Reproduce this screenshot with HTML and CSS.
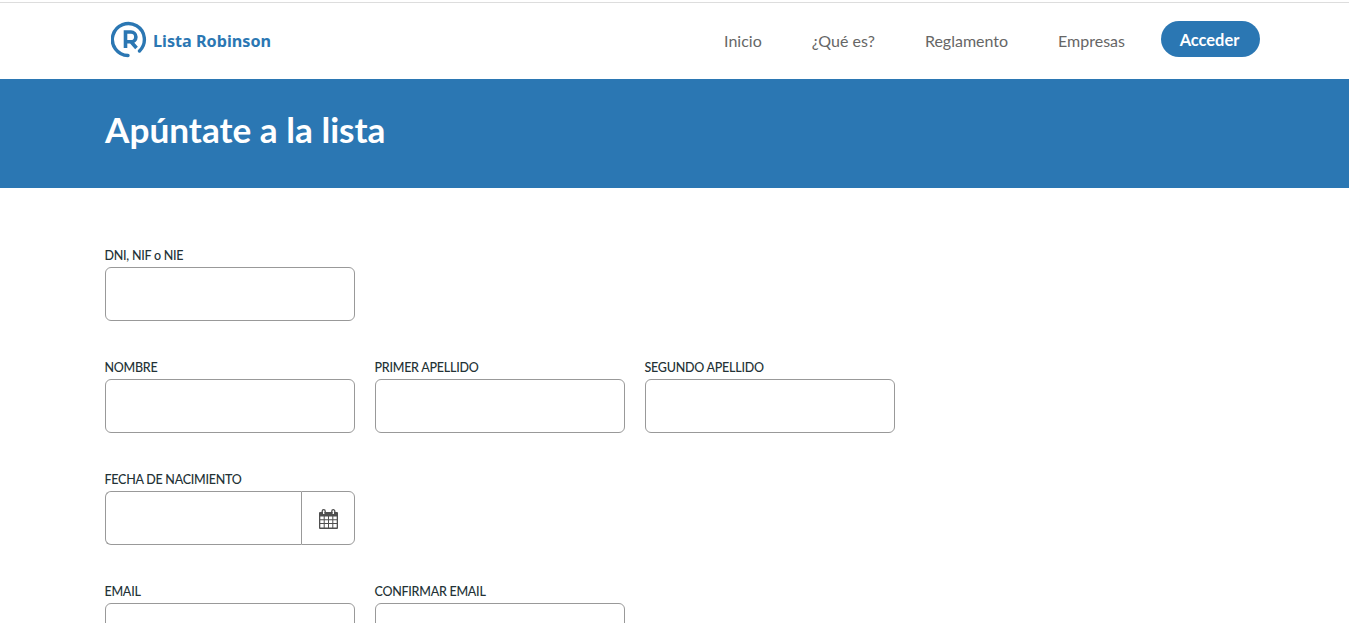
FILE: index.html
```html
<!DOCTYPE html>
<html lang="es">

<head>
    <meta charset="utf-8">
    <meta name="viewport" content="width=device-width, initial-scale=1.0">
    <title>Lista Robinson</title>
    <link rel="stylesheet" href="styles.css">
</head>

<body>
    <div class="page">
        <header class="topbar">
            <a class="logo" href="#">
                <svg class="logo-icon" width="36" height="37" viewBox="0 0 36 37" fill="none" stroke="currentColor"
                    stroke-width="3.400" aria-hidden="true">
                    <path d="M17 34.500A16 16 0 1 1 28.500 30" stroke-linecap="round"></path>
                    <path d="M14.500 27V11h5.500a4.700 4.700 0 0 1 0 9.800h-5.500M20 20.800L25.500 27" stroke-width="3.600"></path>
                </svg>
                <span>Lista Robinson</span>
            </a>
            <nav class="menu">
                <a href="#">Inicio</a>
                <a href="#">¿Qué es?</a>
                <a href="#">Reglamento</a>
                <a href="#">Empresas</a>
            </nav>
            <a class="login" href="#">Acceder</a>
        </header>

        <section class="banner">
            <h1>Apúntate a la lista</h1>
        </section>

        <main>
            <form class="form">
                <div class="row">
                    <div class="field">
                        <label for="dni">DNI, NIF o NIE</label>
                        <input type="text" id="dni">
                    </div>
                </div>
                <div class="row">
                    <div class="field">
                        <label for="nombre">NOMBRE</label>
                        <input type="text" id="nombre">
                    </div>
                    <div class="field">
                        <label for="apellido1">PRIMER APELLIDO</label>
                        <input type="text" id="apellido1">
                    </div>
                    <div class="field">
                        <label for="apellido2">SEGUNDO APELLIDO</label>
                        <input type="text" id="apellido2">
                    </div>
                </div>
                <div class="row">
                    <div class="field">
                        <label for="fecha">FECHA DE NACIMIENTO</label>
                        <div class="date-group">
                            <input type="text" id="fecha">
                            <span class="date-btn">
                                <svg width="19" height="20" viewBox="0 0 19 20" aria-hidden="true">
                                    <path fill="#4f4f4f" d="M1 3h17a1 1 0 0 1 1 1v15a1 1 0 0 1-1 1H1a1 1 0 0 1-1-1V4a1 1 0 0 1 1-1z"></path>
                                    <path fill="#fff" d="M1.300 7.500h3.400v2.700H1.300zM5.700 7.500h3.300v2.700H5.700zM10 7.500h3.300v2.700H10zM14.300 7.500h3.400v2.700h-3.400zM1.300 11.200h3.400v2.700H1.300zM5.700 11.200h3.300v2.700H5.700zM10 11.200h3.300v2.700H10zM14.300 11.200h3.400v2.700h-3.400zM1.300 14.900h3.400v3.700H1.300zM5.700 14.900h3.300v3.700H5.700zM10 14.900h3.300v3.700H10zM14.300 14.900h3.400v3.700h-3.400z"></path>
                                    <path fill="#fff" d="M4 3h1.400v2H4zM13.600 3H15v2h-1.400z"></path>
                                    <path fill="none" stroke="#4f4f4f" stroke-width="1.300" d="M3.200 4V2.200a1.500 1.500 0 0 1 3 0V4M12.800 4V2.200a1.500 1.500 0 0 1 3 0V4"></path>
                                </svg>
                            </span>
                        </div>
                    </div>
                </div>
                <div class="row">
                    <div class="field">
                        <label for="email">EMAIL</label>
                        <input type="text" id="email">
                    </div>
                    <div class="field">
                        <label for="email2">CONFIRMAR EMAIL</label>
                        <input type="text" id="email2">
                    </div>
                </div>
            </form>
        </main>
    </div>
</body>

</html>
```

FILE: styles.css
```css
*,
*::after,
*::before {
    margin: 0;
    padding: 0;
    box-sizing: border-box;
}

html,
body {
    width: 1351px;
    height: 623px;
    overflow: hidden;
    background-color: #fff;
}

body {
    font-family: Lato, 'Liberation Sans', sans-serif;
    padding-top: 2px;
}

a {
    text-decoration: none;
}

.page {
    width: 1349px;
    height: 621px;
    overflow: hidden;
}

.topbar {
    display: flex;
    align-items: center;
    height: 77px;
    padding: 0 89px 5px 111px;
    border-top: 1px solid #ddd;
    background-color: #fff;
}

.logo {
    display: flex;
    align-items: center;
    gap: 6px;
    color: #2b77b3;
    font-family: 'Noto Sans', sans-serif;
    font-size: 16.200px;
    font-weight: 700;
}

.logo-icon {
    display: block;
    margin-top: 2px;
}

.logo span {
    margin-top: 4px;
}

.menu {
    display: flex;
    gap: 50px;
    margin-left: auto;
    margin-right: 36px;
}

.menu a {
    color: #666;
    font-size: 16px;
    line-height: 20px;
    margin-top: 5px;
}

.login {
    display: block;
    width: 99px;
    height: 36px;
    padding-right: 2px;
    border-radius: 18px;
    background-color: #2b77b3;
    color: #fff;
    font-size: 16.400px;
    font-weight: 700;
    line-height: 38px;
    text-align: center;
}

.banner {
    height: 109px;
    padding: 0 105px;
    background-color: #2b77b3;
}

.banner h1 {
    color: #fff;
    font-size: 35.200px;
    font-weight: 700;
    line-height: 100px;
}

.form {
    display: flex;
    flex-direction: column;
    gap: 39px;
    padding: 60px 105px 0;
}

.row {
    display: flex;
    gap: 20px;
}

.field {
    width: 250px;
}

.field label {
    display: block;
    height: 19px;
    margin-left: -.5px;
    color: #233236;
    font-size: 12.500px;
    font-weight: 500;
    line-height: 15px;
    letter-spacing: -.25px;
}

.field input {
    display: block;
    width: 100%;
    height: 54px;
    padding: 0 12px;
    border: 1px solid #999;
    border-radius: 6px;
    background-color: #fff;
    outline: none;
}

.date-group {
    display: flex;
}

.date-group input {
    flex: 1;
    width: auto;
    min-width: 0;
    border-right: 0;
    border-radius: 6px 0 0 6px;
}

.date-btn {
    display: flex;
    align-items: center;
    justify-content: center;
    width: 54px;
    height: 54px;
    padding-top: 2px;
    border: 1px solid #999;
    border-radius: 0 6px 6px 0;
}
```
